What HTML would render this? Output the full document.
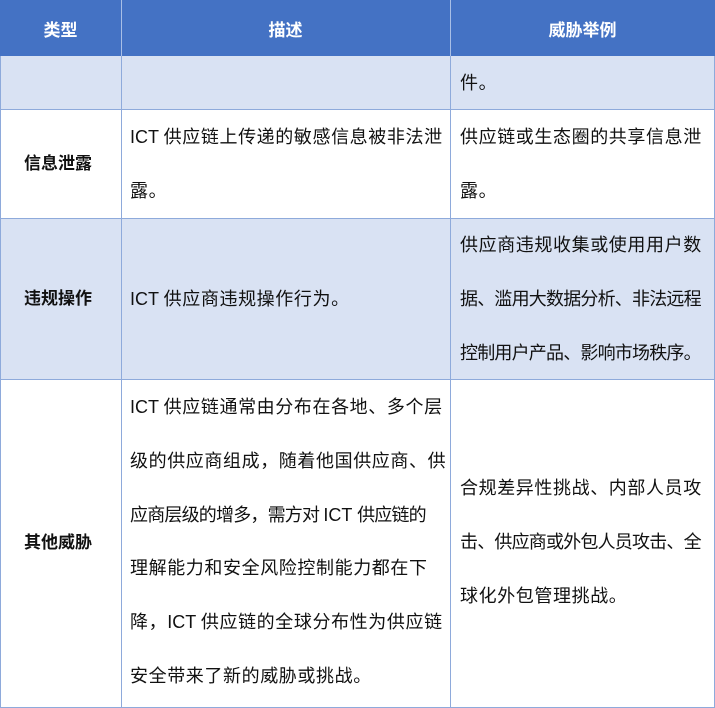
<!DOCTYPE html>
<html><head><meta charset="utf-8"><style>
body{margin:0;width:715px;height:708px;overflow:hidden;background:#fff;font-family:"Liberation Sans","Noto Sans CJK SC",sans-serif;}
.c{position:absolute;box-sizing:border-box;}
.h{background:#4472C4;color:#fff;font-weight:bold;font-size:17px;display:flex;align-items:center;justify-content:center;}
.l{background:#D9E2F3;}
.t{position:absolute;font-size:18px;letter-spacing:0.6px;color:#111;white-space:nowrap;line-height:20px;}
.t.n{letter-spacing:-0.8px;}
.t i{font-style:normal;letter-spacing:0;}
.b{font-weight:bold;font-size:17px;letter-spacing:0;}
.vl{position:absolute;width:1px;background:#8EAADB;}
.hl{position:absolute;height:1px;background:#8EAADB;left:0;width:715px;}
</style></head><body>
<div class="c h" style="left:0;top:0;width:121px;height:56px">类型</div>
<div class="c h" style="left:121px;top:0;width:329px;height:56px">描述</div>
<div class="c h" style="left:450px;top:0;width:265px;height:56px">威胁举例</div>
<div class="c l" style="left:0;top:56px;width:715px;height:53px"></div>
<div class="c l" style="left:0;top:218px;width:715px;height:161px"></div>
<div class="vl" style="left:121px;top:0;height:708px;background:#a9bfe6"></div>
<div class="vl" style="left:450px;top:0;height:708px;background:#a9bfe6"></div>
<div class="vl" style="left:121px;top:56px;height:652px"></div>
<div class="vl" style="left:450px;top:56px;height:652px"></div>
<div class="vl" style="left:0;top:56px;height:652px"></div>
<div class="vl" style="left:714px;top:56px;height:652px"></div>
<div class="hl" style="top:109px"></div>
<div class="hl" style="top:218px"></div>
<div class="hl" style="top:379px"></div>
<div class="hl" style="top:707px"></div>

<div class="t" style="left:460px;top:73px">件。</div>

<div class="t b" style="left:24px;top:154px">信息泄露</div>
<div class="t" style="left:130px;top:127px"><i>ICT </i>供应链上传递的敏感信息被非法泄</div>
<div class="t" style="left:130px;top:181px">露。</div>
<div class="t" style="left:460px;top:127px">供应链或生态圈的共享信息泄</div>
<div class="t" style="left:460px;top:181px">露。</div>

<div class="t b" style="left:24px;top:289px">违规操作</div>
<div class="t" style="left:130px;top:289px"><i>ICT </i>供应商违规操作行为。</div>
<div class="t" style="left:460px;top:235px">供应商违规收集或使用用户数</div>
<div class="t n" style="left:460px;top:289px">据、滥用大数据分析、非法远程</div>
<div class="t n" style="left:460px;top:343px">控制用户产品、影响市场秩序。</div>

<div class="t b" style="left:24px;top:533px">其他威胁</div>
<div class="t" style="left:130px;top:397px"><i>ICT </i>供应链通常由分布在各地、多个层</div>
<div class="t" style="left:130px;top:451px">级的供应商组成，随着他国供应商、供</div>
<div class="t n" style="left:130px;top:505px">应商层级的增多，需方对 <i>ICT </i>供应链的</div>
<div class="t" style="left:130px;top:558px">理解能力和安全风险控制能力都在下</div>
<div class="t" style="left:130px;top:612px">降，<i>ICT </i>供应链的全球分布性为供应链</div>
<div class="t" style="left:130px;top:666px">安全带来了新的威胁或挑战。</div>
<div class="t" style="left:460px;top:478px">合规差异性挑战、内部人员攻</div>
<div class="t n" style="left:460px;top:532px">击、供应商或外包人员攻击、全</div>
<div class="t" style="left:460px;top:586px">球化外包管理挑战。</div>
</body></html>
